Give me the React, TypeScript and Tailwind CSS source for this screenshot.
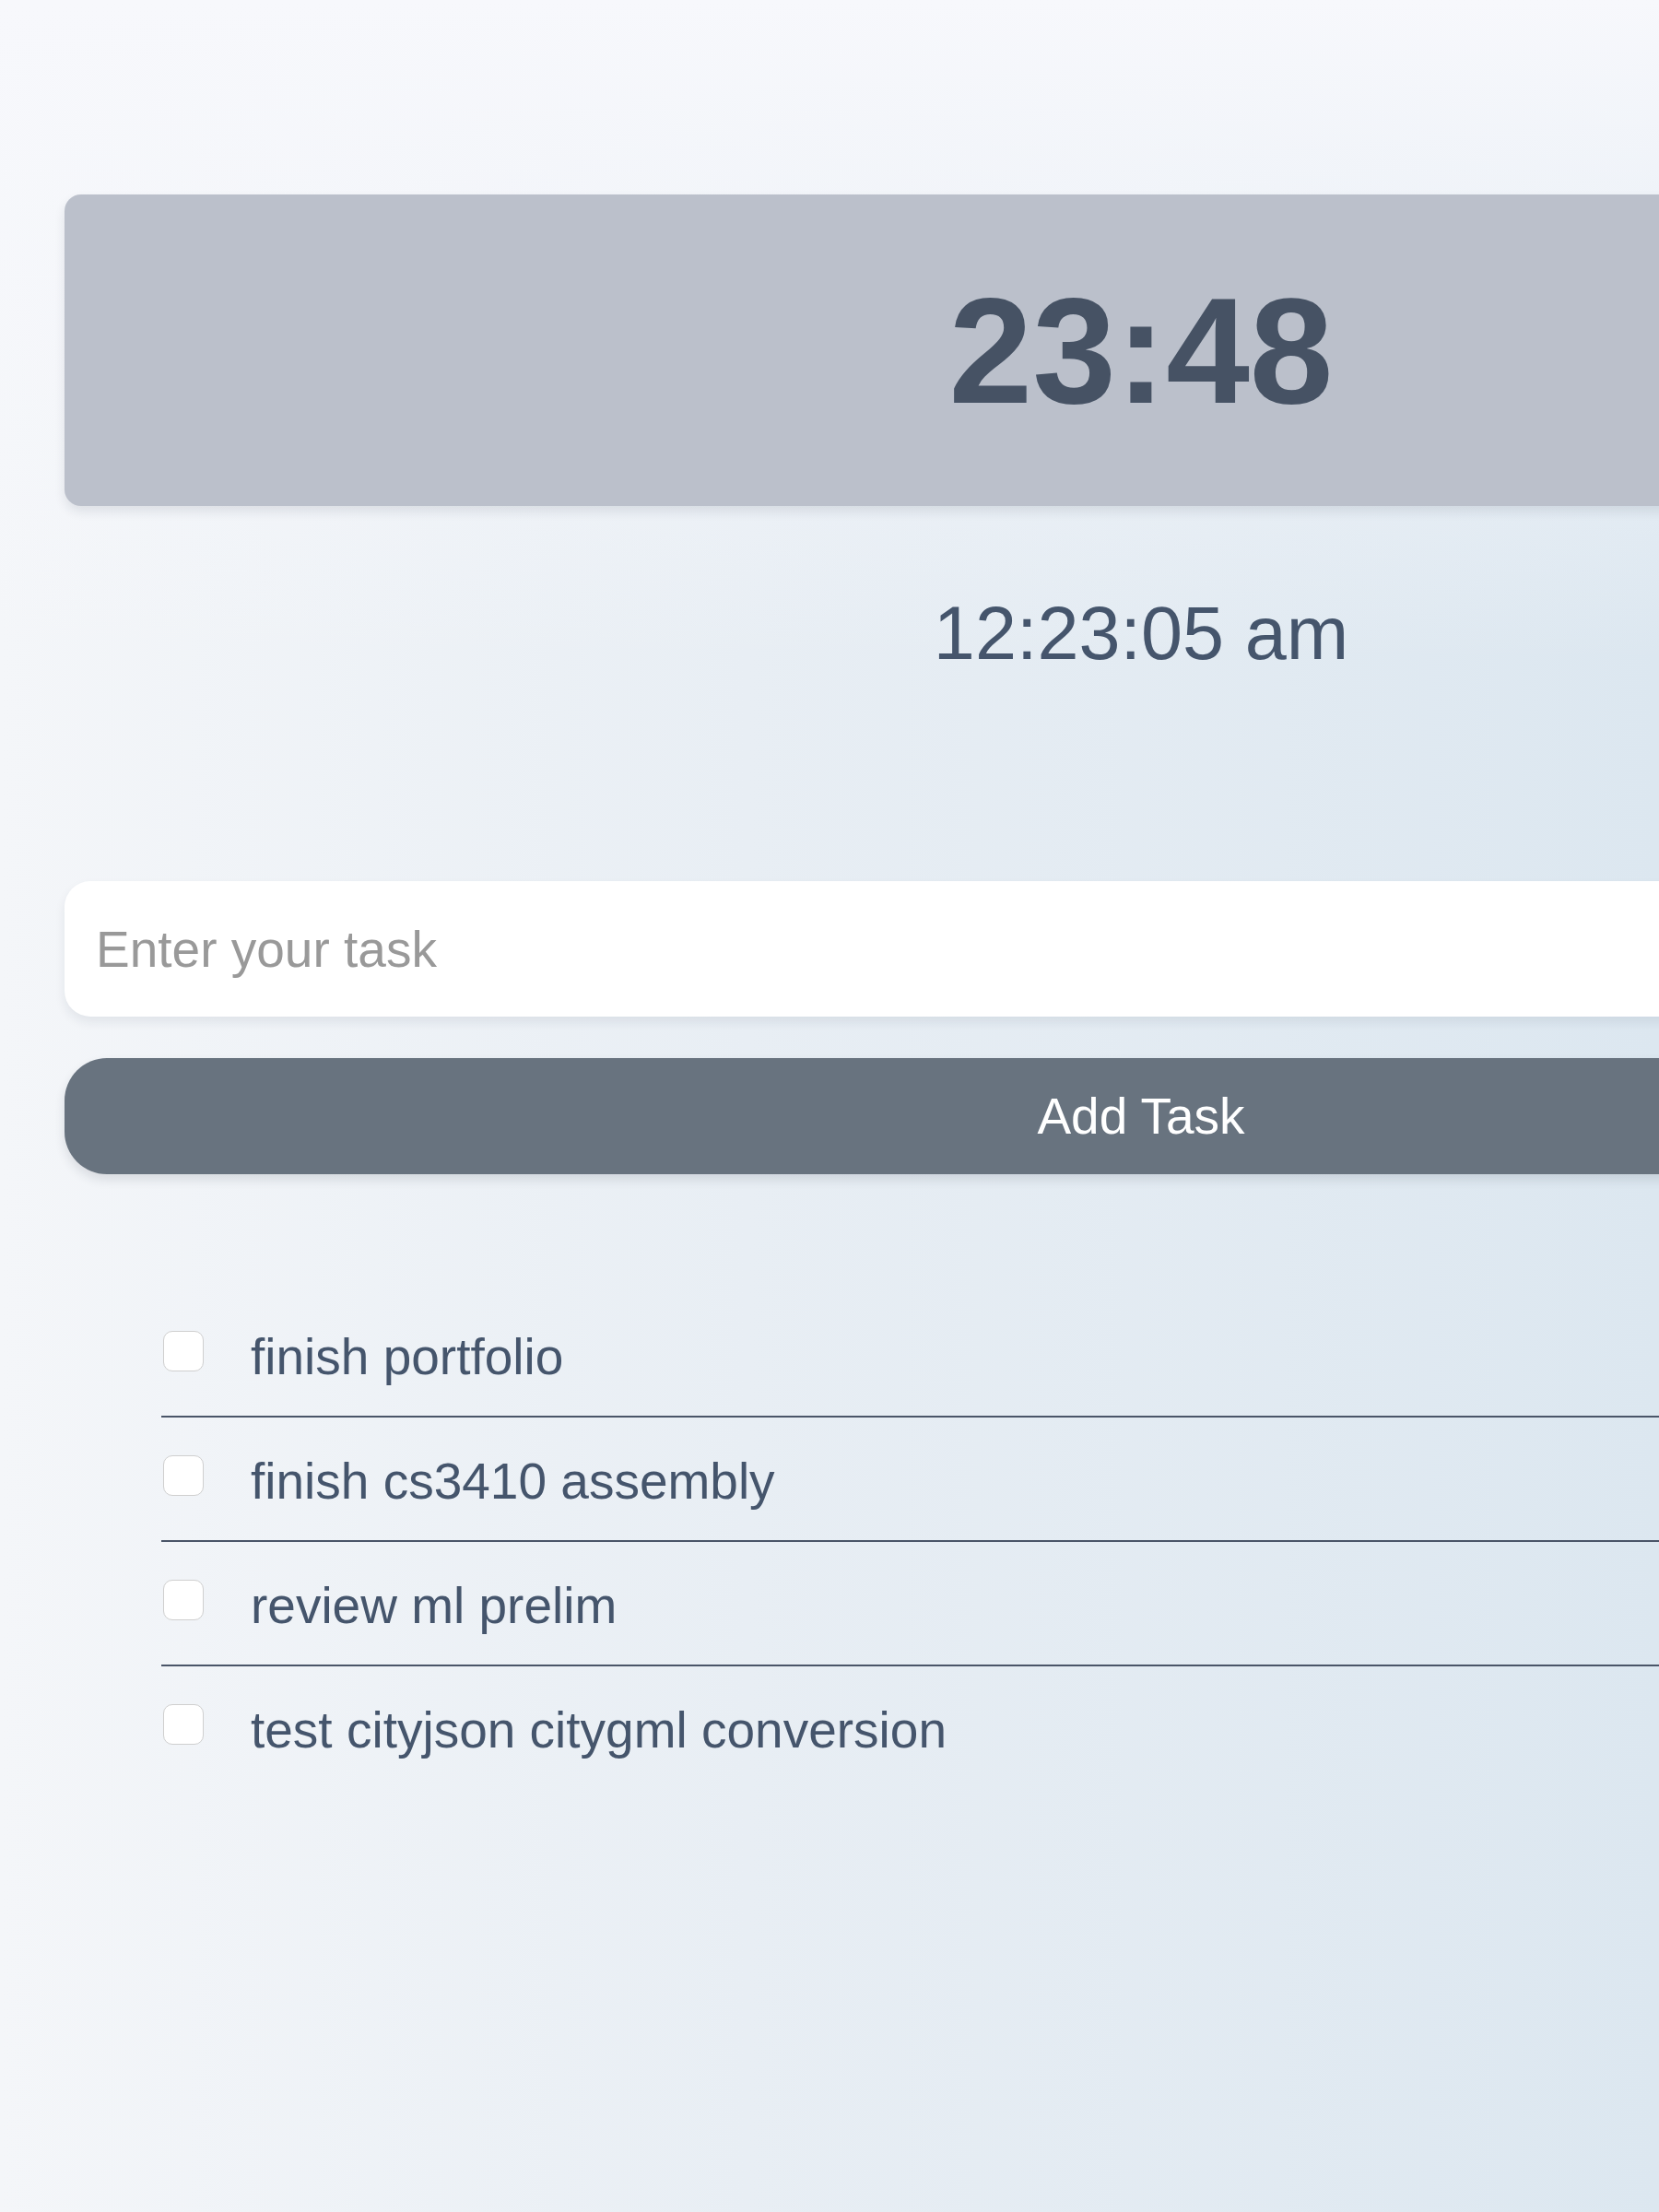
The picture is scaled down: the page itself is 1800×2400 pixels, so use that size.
import { useState } from "react";

const tasks = [
  "finish portfolio",
  "finish cs3410 assembly",
  "review ml prelim",
  "test cityjson citygml conversion",
];

export default function App() {
  const [task, setTask] = useState("");

  return (
    <div className="min-h-screen w-full overflow-hidden bg-[linear-gradient(180deg,#f7f8fc_0%,rgba(247,248,252,0)_30%),linear-gradient(90deg,#f4f6f9_0%,#e8eef4_45%,#dce7f0_100%)] font-['Liberation_Sans',Arial,sans-serif] text-slate-600">
      <div className="ml-[70px] w-[2336px] pt-[211px] pb-[200px]">
        {/* timer */}
        <div className="flex h-[338px] items-center justify-center rounded-[18px] bg-[#bbc0cb] shadow-[0_6px_12px_rgba(30,41,59,0.10)]">
          <span className="text-[163px] font-bold leading-none text-[#465264]">23:48</span>
        </div>

        <div className="mt-[92px] text-center text-[81px] leading-[92px]">12:23:05 am</div>

        {/* task input */}
        <input
          value={task}
          onChange={(e) => setTask(e.target.value)}
          placeholder="Enter your task"
          className="mt-[223px] block h-[147px] w-full rounded-[28px] bg-white pl-[34px] text-[55px] text-slate-600 shadow-[0_6px_12px_rgba(30,41,59,0.08)] outline-none placeholder:text-[#999999]"
        />
        <button className="mt-[45px] flex h-[126px] w-full items-center justify-center rounded-[46px] bg-[#68737f] text-[55px] text-white shadow-[0_6px_12px_rgba(30,41,59,0.12)]">
          Add Task
        </button>

        {/* tasks */}
        <ul className="mt-[129px] mx-[105px]">
          {tasks.map((t) => (
            <li
              key={t}
              className="flex items-start border-b-2 border-[#4a5568] pt-[38px] pb-[33px] last:border-b-0"
            >
              <input
                type="checkbox"
                className="mt-[3px] ml-[2px] h-[44px] w-[44px] shrink-0 appearance-none rounded-[10px] border-[1.5px] border-[#cfcfcf] bg-white"
              />
              <span className="ml-[51px] text-[55px] leading-[62px]">{t}</span>
            </li>
          ))}
        </ul>
      </div>
    </div>
  );
}
